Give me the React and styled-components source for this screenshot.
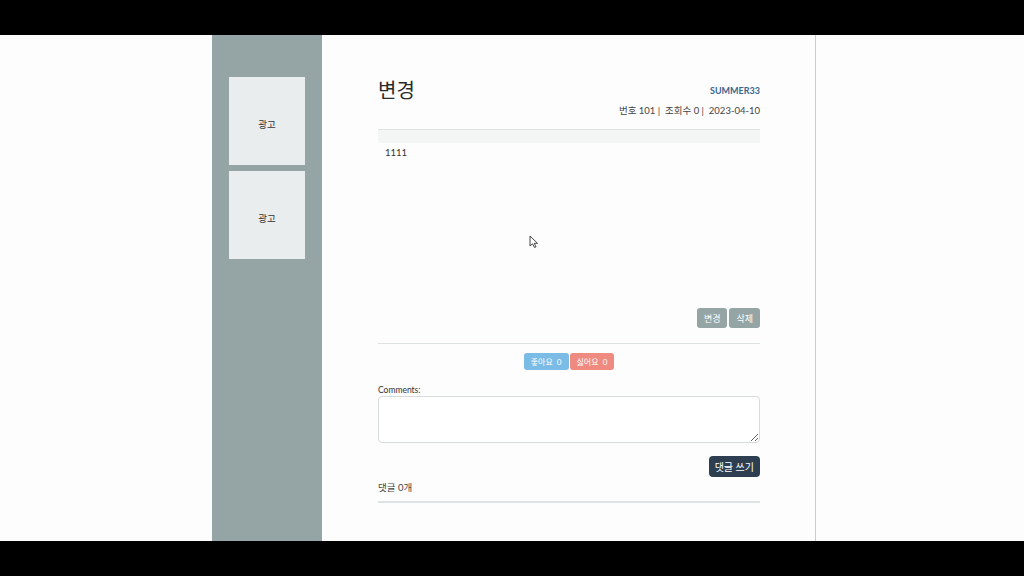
import React from "react";
import styled, { createGlobalStyle } from "styled-components";

const GlobalStyle = createGlobalStyle`
  body {
    margin: 0;
    background: #000;
    font-family: Lato, "Noto Sans CJK KR", sans-serif;
  }
  * { box-sizing: border-box; }
`;

const Frame = styled.div`
  width: 1024px;
  height: 576px;
  display: flex;
  flex-direction: column;
  background: #000;
`;

const Letterbox = styled.div`
  height: 35px;
  flex-shrink: 0;
  background: #000;
`;

const Page = styled.div`
  position: relative;
  flex: 1;
  display: flex;
  padding-left: 212px;
  background: #fdfdfe;
  overflow: hidden;
`;

const Sidebar = styled.aside`
  width: 110px;
  background: #95a5a6;
  padding: 42px 17px 0;
  display: flex;
  flex-direction: column;
  gap: 6px;
`;

const AdBox = styled.div`
  width: 76px;
  height: 88px;
  padding-top: 6px;
  background: #e9edee;
  display: flex;
  align-items: center;
  justify-content: center;
  font-size: 9.5px;
  color: #333;
`;

const Main = styled.main`
  width: 494px;
  border-right: 1px solid #ccc;
  padding: 43px 55px 0 56px;
`;

const Header = styled.div`
  display: flex;
  justify-content: space-between;
  align-items: center;
`;

const Title = styled.h1`
  margin: 0;
  font-size: 20px;
  font-weight: 400;
  line-height: 24px;
  color: #2a2a2a;
`;

const Author = styled.span`
  font-size: 9px;
  font-weight: 700;
  color: #3a6690;
`;

const Meta = styled.div`
  margin-top: 2px;
  text-align: right;
  font-size: 9.5px;
  line-height: 14px;
  color: #444;
`;

const Post = styled.div`
  margin-top: 11px;
  border-top: 1px solid #dde2e2;
`;

const PostHead = styled.div`
  height: 13px;
  background: #f4f5f5;
`;

const PostBody = styled.div`
  height: 160px;
  padding: 4px 7px;
  font-size: 9.5px;
  line-height: 12px;
  color: #333;
`;

const ButtonRow = styled.div`
  display: flex;
  justify-content: ${(p) => p.$align || "flex-end"};
  gap: ${(p) => p.$gap || 2}px;
  margin-top: ${(p) => p.$mt || 0}px;
`;

const Button = styled.button`
  border: 0;
  border-radius: ${(p) => p.$radius || 3}px;
  height: ${(p) => p.$h || 20}px;
  padding: 0 ${(p) => p.$px || 7}px;
  background: ${(p) => p.$bg};
  color: #fff;
  font-family: inherit;
  font-size: ${(p) => p.$fs || 9}px;
  cursor: pointer;
`;

const Rule = styled.hr`
  margin: ${(p) => p.$mt || 0}px 0 0;
  border: 0;
  border-top: ${(p) => p.$w || 1}px solid #dde2e2;
`;

const Label = styled.div`
  margin-top: 14px;
  font-size: 8.5px;
  line-height: 12px;
  color: #333;
`;

const TextArea = styled.textarea`
  display: block;
  width: 100%;
  height: 47px;
  margin-top: 0;
  border: 1px solid #d6dbdc;
  border-radius: 4px;
  background: #fff;
  resize: vertical;
`;

const CommentCount = styled.div`
  margin-top: 4px;
  font-size: 9.5px;
  line-height: 14px;
  color: #444;
`;

const Cursor = styled.svg`
  position: absolute;
  left: 529px;
  top: 200px;
`;

export default function App() {
  return (
    <>
      <GlobalStyle />
      <Frame>
        <Letterbox />
        <Page>
          <Sidebar>
            <AdBox>광고</AdBox>
            <AdBox>광고</AdBox>
          </Sidebar>
          <Main>
            <Header>
              <Title>변경</Title>
              <Author>SUMMER33</Author>
            </Header>
            <Meta>번호 101 | &nbsp;조회수 0 | &nbsp;2023-04-10</Meta>
            <Post>
              <PostHead />
              <PostBody>1111</PostBody>
            </Post>
            <ButtonRow $mt={5}>
              <Button $bg="#95a5a6">변경</Button>
              <Button $bg="#95a5a6">삭제</Button>
            </ButtonRow>
            <Rule $mt={15} />
            <ButtonRow $align="center" $gap={1} $mt={9}>
              <Button $bg="#7bbce6" $h={17} $fs={8} $px={7}>
                좋아요 &nbsp;0
              </Button>
              <Button $bg="#ee8a80" $h={17} $fs={8} $px={7}>
                싫어요 &nbsp;0
              </Button>
            </ButtonRow>
            <Label>Comments:</Label>
            <TextArea />
            <ButtonRow $mt={13}>
              <Button $bg="#2c3e50" $h={21} $fs={10} $px={6} $radius={4}>
                댓글 쓰기
              </Button>
            </ButtonRow>
            <CommentCount>댓글 0개</CommentCount>
            <Rule $mt={6} $w={2} />
          </Main>
          <Cursor width="10" height="14" viewBox="0 0 10 14">
            <path d="M1 1 L1 11 L3.5 8.8 L5.5 12.5 L7 11.8 L5.2 8.3 L8.5 8.3 Z" fill="#fff" stroke="#444" strokeWidth="1" />
          </Cursor>
        </Page>
        <Letterbox />
      </Frame>
    </>
  );
}
